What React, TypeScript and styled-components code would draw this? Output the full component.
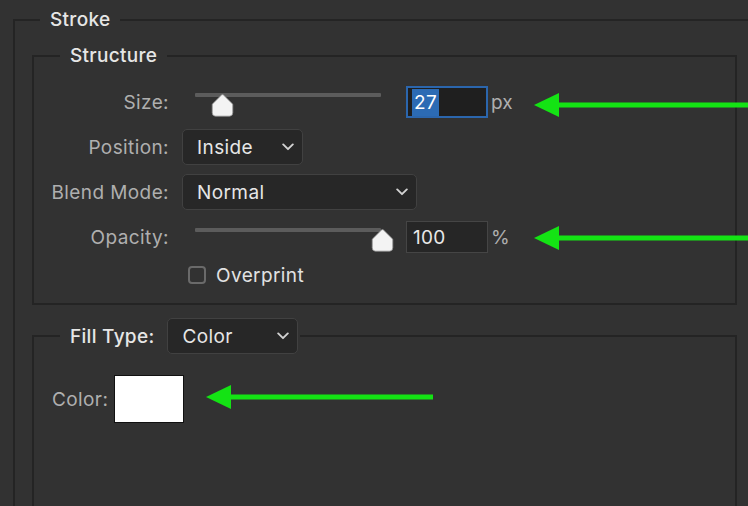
import styled, { createGlobalStyle } from 'styled-components';

const GlobalStyle = createGlobalStyle`
    html, body {
        margin: 0;
        padding: 0;
        background: #323232;
        overflow: hidden;
    }
    body {
        font-family: Inter, "Noto Sans", "Liberation Sans", sans-serif;
    }
`

const Chevron = () => (
    <svg width="12" height="8" viewBox="0 0 12 8">
        <path d="M1.2 1.4 L6 6.2 L10.8 1.4" fill="none" stroke="#d2d2d2" strokeWidth="1.9" strokeLinecap="round" strokeLinejoin="round" />
    </svg>
)

const ThumbShape = () => (
    <svg width="23" height="23" viewBox="0 0 23 23">
        <path
            d="M11.5 0.6 Q12.2 0.6 12.8 1.3 L21.8 10.2 L21.8 18.8 Q21.8 22.2 18.4 22.2 L4.6 22.2 Q1.2 22.2 1.2 18.8 L1.2 10.2 L10.2 1.3 Q10.8 0.6 11.5 0.6 Z"
            fill="#f3f3f3"
            stroke="#8c8c8c"
            strokeWidth="0.8"
        />
    </svg>
)

type ArrowProps = { length: number; shift?: number; gap: number }

const Arrow = ({ length, shift = 0, gap }: ArrowProps) => (
    <ArrowBox $shift={shift} $gap={gap}>
        <svg width={length} height="24" viewBox={`0 0 ${length} 24`}>
            <polygon points="0,12 25,0 25,24" fill="#14e314" />
            <rect x="24" y="9.5" width={length - 24} height="5" fill="#14e314" />
        </svg>
    </ArrowBox>
)

const Slider = ({ percent }: { percent: number }) => (
    <StyledSlider>
        <Track />
        <Thumb style={{ left: `calc(${percent}% - 11.5px)` }}>
            <ThumbShape />
        </Thumb>
    </StyledSlider>
)

const Select = ({ label, width }: { label: string; width: number }) => (
    <StyledSelect $width={width}>
        <span>{label}</span>
        <Chevron />
    </StyledSelect>
)

const App = () => {
    return (
        <>
            <GlobalStyle />
            <Page>
                <OuterGroup>
                    <GroupLegend $offset={8}>Stroke</GroupLegend>

                    <InnerGroup $padLeft={0} $padTop={17} $padBottom={19}>
                        <GroupLegend $offset={26}>Structure</GroupLegend>
                        <FormGrid>
                            <Label>Size:</Label>
                            <Controls>
                                <Slider percent={15} />
                                <NumberField $focused>
                                    <Selected>27</Selected>
                                </NumberField>
                                <Unit>px</Unit>
                                <Arrow length={230} gap={19} shift={3} />
                            </Controls>

                            <Label>Position:</Label>
                            <Controls>
                                <Select label="Inside" width={121} />
                            </Controls>

                            <Label>Blend Mode:</Label>
                            <Controls>
                                <Select label="Normal" width={235} />
                            </Controls>

                            <Label>Opacity:</Label>
                            <Controls>
                                <Slider percent={101} />
                                <NumberField>100</NumberField>
                                <Unit>%</Unit>
                                <Arrow length={230} gap={19} shift={1} />
                            </Controls>

                            <CheckRow>
                                <CheckBox />
                                <CheckText>Overprint</CheckText>
                            </CheckRow>
                        </FormGrid>
                    </InnerGroup>

                    <InnerGroup $padLeft={18} $padTop={21} $padBottom={200} $spaced>
                        <FillLegend>
                            <span>Fill Type:</span>
                            <Select label="Color" width={131} />
                        </FillLegend>
                        <ColorRow>
                            <Label>Color:</Label>
                            <Swatch />
                            <Arrow length={227} gap={22} shift={-2} />
                        </ColorRow>
                    </InnerGroup>
                </OuterGroup>
            </Page>
        </>
    );
};

export default App;

const Page = styled.div`
    box-sizing: border-box;
    height: 506px;
    overflow: hidden;
    padding: 9px 0 0 13px;
`
const OuterGroup = styled.fieldset`
    box-sizing: border-box;
    width: 760px;
    min-width: 0;
    margin: 0;
    padding: 14px 36px 0 17px;
    border: 2px solid #242424;
    border-right: none;
`
const InnerGroup = styled.fieldset<{ $padLeft: number; $padTop: number; $padBottom: number; $spaced?: boolean }>`
    box-sizing: border-box;
    min-width: 0;
    margin: ${(p) => (p.$spaced ? '13px 0 0' : '0')};
    padding: ${(p) => `${p.$padTop}px 0 ${p.$padBottom}px ${p.$padLeft}px`};
    border: 2px solid #242424;
`
const GroupLegend = styled.legend<{ $offset: number }>`
    margin-left: ${(p) => p.$offset}px;
    padding: 0 10px;
    font-size: 19px;
    font-weight: 500;
    line-height: 22px;
    letter-spacing: 0.3px;
    color: #e6e6e6;
`
const FillLegend = styled.legend`
    margin-left: 8px;
    padding: 0 2px 0 10px;
    display: flex;
    align-items: center;
    gap: 13px;
    font-size: 19px;
    font-weight: 500;
    letter-spacing: 0.3px;
    color: #e6e6e6;
`
const FormGrid = styled.div`
    display: grid;
    grid-template-columns: 135px 1fr;
    column-gap: 13px;
    row-gap: 9px;
`
const Label = styled.div`
    text-align: right;
    align-self: center;
    font-size: 19px;
    letter-spacing: 0.4px;
    color: #afafaf;
    white-space: nowrap;
`
const Controls = styled.div`
    display: flex;
    align-items: center;
    height: 36px;
`
const StyledSlider = styled.div`
    position: relative;
    align-self: flex-start;
    width: 186px;
    height: 24px;
    margin: 9px 0 0 13px;
`
const Track = styled.div`
    height: 4px;
    background: #5c5c5c;
    border-radius: 1px;
`
const Thumb = styled.div`
    position: absolute;
    top: 1px;
    width: 23px;
    height: 23px;
    display: flex;
`
const NumberField = styled.div<{ $focused?: boolean }>`
    box-sizing: border-box;
    display: flex;
    align-items: center;
    width: 82px;
    height: 32px;
    margin-left: 25px;
    padding-left: ${(p) => (p.$focused ? '4px' : '6px')};
    background: ${(p) => (p.$focused ? '#1f1f1f' : '#262626')};
    border: ${(p) => (p.$focused ? '2px solid #2b66ad' : '1px solid #454545')};
    font-size: 19px;
    letter-spacing: 0.3px;
    color: #e8e8e8;
`
const Selected = styled.span`
    padding: 0 2px;
    line-height: 27px;
    background: #2c6bb4;
    color: #ffffff;
`
const Unit = styled.span`
    width: 24px;
    margin-left: 3px;
    font-size: 19px;
    color: #afafaf;
`
const ArrowBox = styled.div<{ $shift: number; $gap: number }>`
    display: flex;
    margin-left: ${(p) => p.$gap}px;
    transform: translateY(${(p) => p.$shift}px);
`
const StyledSelect = styled.div<{ $width: number }>`
    box-sizing: border-box;
    display: flex;
    align-items: center;
    justify-content: space-between;
    width: ${(p) => p.$width}px;
    height: 36px;
    padding: 0 8px 0 14px;
    background: #272727;
    border: 1px solid #414141;
    border-radius: 5px;
    font-size: 19px;
    font-weight: 400;
    letter-spacing: 0.4px;
    color: #e6e6e6;
`
const CheckRow = styled.div`
    grid-column: 2;
    display: flex;
    align-items: center;
    height: 18px;
    margin: 2px 0 0 6px;
`
const CheckBox = styled.div`
    box-sizing: border-box;
    width: 18px;
    height: 18px;
    border: 2px solid #6a6a6a;
    border-radius: 4px;
`
const CheckText = styled.span`
    margin-left: 10px;
    font-size: 19px;
    letter-spacing: 0.4px;
    color: #e2e2e2;
`
const ColorRow = styled.div`
    display: flex;
    align-items: center;
`
const Swatch = styled.div`
    box-sizing: border-box;
    width: 70px;
    height: 48px;
    margin-left: 6px;
    background: #ffffff;
    border: 1px solid #111111;
`
